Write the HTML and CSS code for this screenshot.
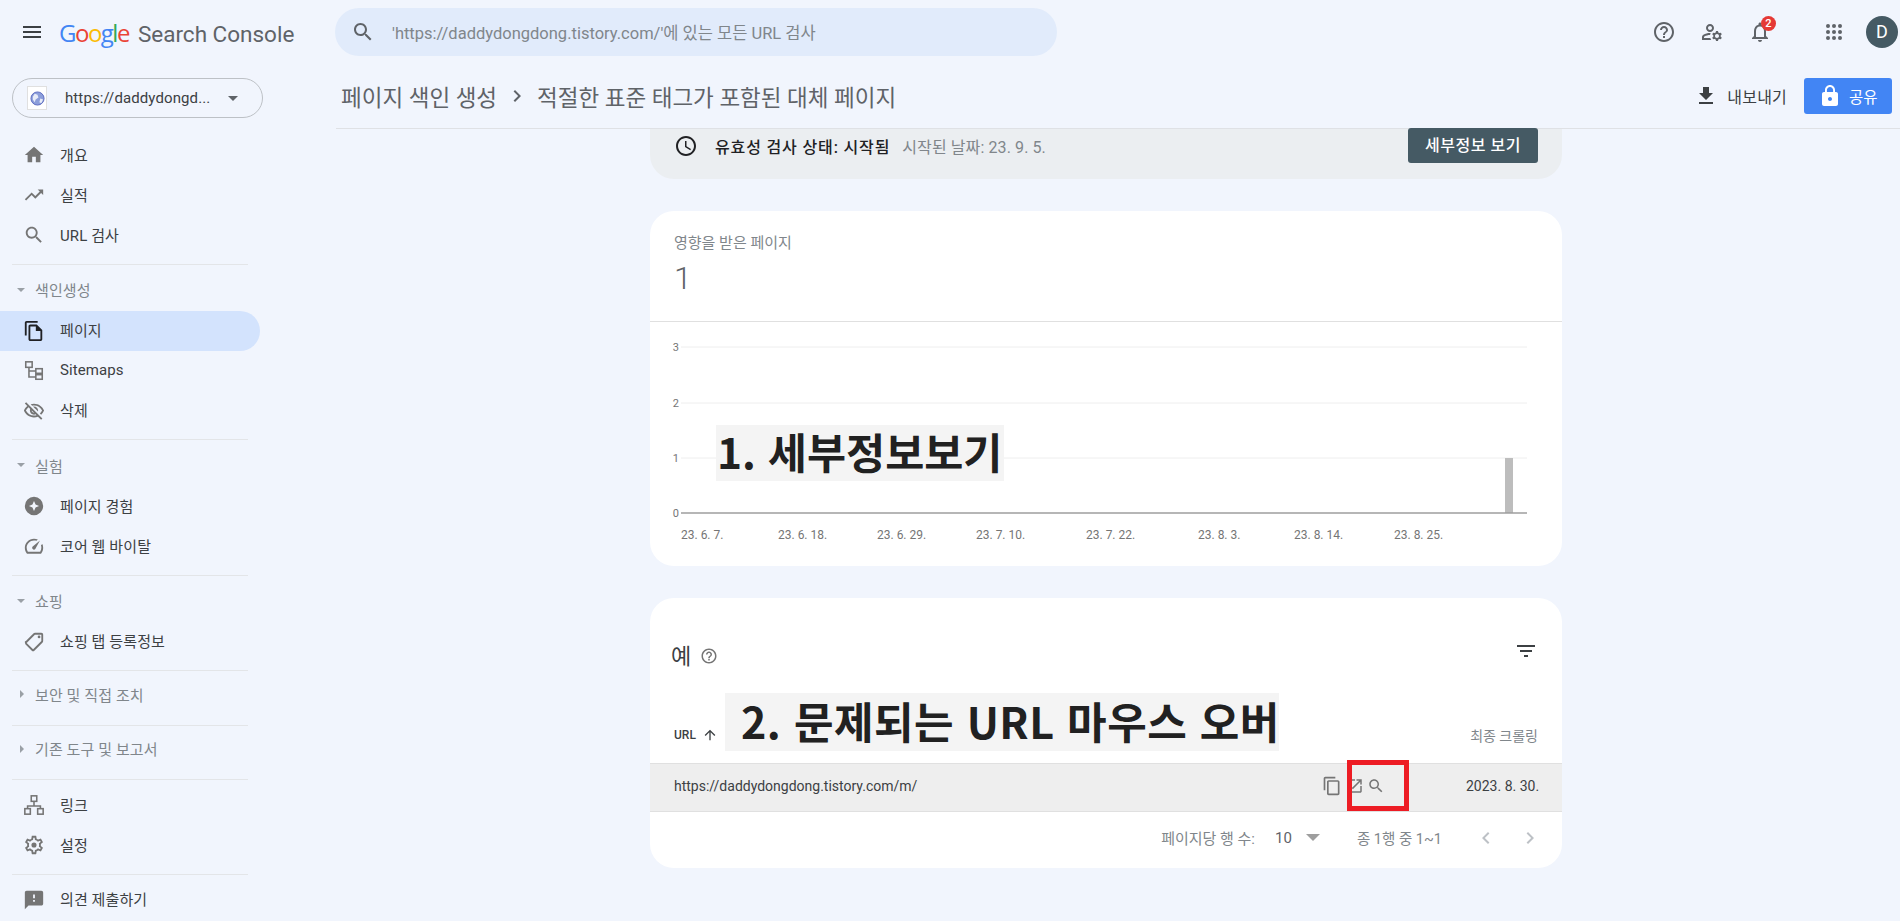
FILE: index.html
```html
<!DOCTYPE html>
<html lang="ko">

<head>
    <meta charset="UTF-8">
    <meta name="viewport" content="width=device-width, initial-scale=1.0">
    <title>Search Console</title>
    <link rel="stylesheet" href="styles.css">
</head>

<body>
    <svg class="sprite" width="0" height="0">
        <symbol id="i-menu" viewBox="0 0 24 24"><path d="M3 18h18v-2H3v2zm0-5h18v-2H3v2zm0-7v2h18V6H3z"/></symbol>
        <symbol id="i-search" viewBox="0 0 24 24"><path d="M15.5 14h-.79l-.28-.27C15.41 12.59 16 11.11 16 9.5 16 5.91 13.09 3 9.5 3S3 5.91 3 9.5 5.91 16 9.5 16c1.61 0 3.09-.59 4.23-1.57l.27.28v.79l5 4.99L20.49 19l-4.99-5zm-6 0C7.01 14 5 11.99 5 9.5S7.01 5 9.5 5 14 7.01 14 9.5 11.99 14 9.5 14z"/></symbol>
        <symbol id="i-help" viewBox="0 0 24 24"><path d="M11 18h2v-2h-2v2zm1-16C6.48 2 2 6.48 2 12s4.48 10 10 10 10-4.48 10-10S17.52 2 12 2zm0 18c-4.41 0-8-3.59-8-8s3.59-8 8-8 8 3.59 8 8-3.59 8-8 8zm0-14c-2.21 0-4 1.79-4 4h2c0-1.1.9-2 2-2s2 .9 2 2c0 2-3 1.75-3 5h2c0-2.25 3-2.5 3-5 0-2.21-1.79-4-4-4z"/></symbol>
        <symbol id="i-admin" viewBox="0 0 24 24"><path d="M4 18v-.65c0-.34.16-.66.41-.81C6.1 15.53 8.03 15 10 15c.03 0 .05 0 .08.01.1-.7.3-1.37.59-1.98-.22-.02-.44-.03-.67-.03-2.42 0-4.68.67-6.61 1.82-.88.52-1.39 1.5-1.39 2.53V20h9.26c-.42-.6-.75-1.28-.97-2H4zM10 12c2.21 0 4-1.79 4-4s-1.79-4-4-4-4 1.79-4 4 1.79 4 4 4zm0-6c1.1 0 2 .9 2 2s-.9 2-2 2-2-.9-2-2 .9-2 2-2zM20.75 16c0-.22-.03-.42-.06-.63l1.14-1.01-1-1.73-1.45.49c-.32-.27-.68-.48-1.08-.63L18 11h-2l-.3 1.49c-.4.15-.76.36-1.08.63l-1.45-.49-1 1.73 1.14 1.01c-.03.21-.06.41-.06.63s.03.42.06.63l-1.14 1.01 1 1.73 1.45-.49c.32.27.68.48 1.08.63L16 21h2l.3-1.49c.4-.15.76-.36 1.08-.63l1.45.49 1-1.73-1.14-1.01c.03-.21.06-.41.06-.63zM17 18c-1.1 0-2-.9-2-2s.9-2 2-2 2 .9 2 2-.9 2-2 2z"/></symbol>
        <symbol id="i-bell" viewBox="0 0 24 24"><path d="M12 22c1.1 0 2-.9 2-2h-4c0 1.1.9 2 2 2zm6-6v-5c0-3.07-1.63-5.64-4.5-6.32V4c0-.83-.67-1.5-1.5-1.5s-1.5.67-1.5 1.5v.68C7.64 5.36 6 7.92 6 11v5l-2 2v1h16v-1l-2-2zm-2 1H8v-6c0-2.48 1.51-4.5 4-4.5s4 2.02 4 4.5v6z"/></symbol>
        <symbol id="i-apps" viewBox="0 0 24 24"><circle cx="6" cy="6" r="2"/><circle cx="12" cy="6" r="2"/><circle cx="18" cy="6" r="2"/><circle cx="6" cy="12" r="2"/><circle cx="12" cy="12" r="2"/><circle cx="18" cy="12" r="2"/><circle cx="6" cy="18" r="2"/><circle cx="12" cy="18" r="2"/><circle cx="18" cy="18" r="2"/></symbol>
        <symbol id="i-home" viewBox="0 0 24 24"><path d="M10 20v-6h4v6h5v-8h3L12 3 2 12h3v8z"/></symbol>
        <symbol id="i-trend" viewBox="0 0 24 24"><path d="M16 6l2.29 2.29-4.88 4.88-4-4L2 16.59 3.41 18l6-6 4 4 6.3-6.29L22 12V6z"/></symbol>
        <symbol id="i-pages" viewBox="0 0 24 24"><path d="M16 1H4c-1.1 0-2 .9-2 2v14h2V3h12V1zm-1 4H8c-1.1 0-1.99.9-1.99 2L6 21c0 1.1.89 2 1.99 2H19c1.1 0 2-.9 2-2V11l-6-6zM8 21V7h6v5h5v9H8z"/></symbol>
        <symbol id="i-sitemap" viewBox="0 0 24 24"><g fill="none" stroke="#757575" stroke-width="1.7"><rect x="3" y="2" width="7" height="6"/><rect x="14" y="9.500" width="7" height="5"/><rect x="14" y="16" width="7" height="5"/><path d="M6.500 8v10.500H14M6.500 12H14"/></g></symbol>
        <symbol id="i-eye" viewBox="0 0 24 24"><path d="M12 6c3.79 0 7.170 2.130 8.820 5.500-.59 1.220-1.420 2.270-2.410 3.120l1.410 1.410c1.390-1.230 2.490-2.770 3.180-4.530C21.270 7.110 17 4 12 4c-1.270 0-2.490.2-3.640.57l1.650 1.650C10.660 6.090 11.320 6 12 6zm-1.070 1.140L13 9.210c.57.25 1.030.71 1.280 1.280l2.070 2.070c.08-.34.14-.7.14-1.070C16.500 9.010 14.480 7 12 7c-.37 0-.72.05-1.070.14zM2.010 3.870l2.680 2.680C3.060 7.830 1.770 9.530 1 11.500 2.730 15.890 7 19 12 19c1.520 0 2.980-.29 4.320-.82l3.420 3.420 1.410-1.410L3.420 2.450 2.010 3.870zm7.500 7.500l2.610 2.610c-.04.01-.08.02-.12.02-1.380 0-2.500-1.120-2.500-2.500 0-.05.01-.08.01-.13zm-3.400-3.400l1.750 1.750c-.23.55-.36 1.150-.36 1.780 0 2.480 2.020 4.500 4.500 4.500.63 0 1.230-.13 1.770-.36l.98.98c-.88.24-1.800.38-2.750.38-3.790 0-7.170-2.130-8.820-5.500.7-1.430 1.720-2.610 2.930-3.530z"/></symbol>
        <symbol id="i-star" viewBox="0 0 24 24"><path fill-rule="evenodd" d="M12 2a10 10 0 1 0 0 20 10 10 0 0 0 0-20zm0 4.500l1.700 3.800 3.800 1.700-3.800 1.700-1.700 3.800-1.700-3.800-3.800-1.700 3.800-1.700z"/></symbol>
        <symbol id="i-gauge" viewBox="0 0 24 24"><path d="M12 4C6.500 4 2 8.500 2 14c0 2.200.7 4.300 2 6l.3.400h15.400l.3-.4c1.300-1.700 2-3.800 2-6 0-1.500-.3-2.900-.9-4.200l-1.500 1.500c.3.900.4 1.800.4 2.700 0 1.600-.5 3.100-1.300 4.400H5.300C4.500 17.100 4 15.600 4 14c0-4.400 3.600-8 8-8 .9 0 1.800.1 2.700.4l1.500-1.500C14.900 4.300 13.500 4 12 4zm6.500 1.900l-7.900 6.700c-.8.800-.8 2 0 2.800.8.800 2 .8 2.800 0z"/></symbol>
        <symbol id="i-tag" viewBox="0 0 24 24"><path d="M2.590 11.580l9-9C11.950 2.220 12.450 2 13 2h7c1.100 0 2 .9 2 2v7c0 .55-.22 1.050-.59 1.420l-9 9c-.36.36-.86.58-1.410.58s-1.050-.22-1.410-.59l-7-7C2.220 13.050 2 12.550 2 12s.23-1.060.59-1.420zM11 20.010L20 11V4h-7v-.01l-9 9 7 7.020z"/><circle cx="17.500" cy="6.500" r="1.500"/></symbol>
        <symbol id="i-links" viewBox="0 0 24 24"><g fill="none" stroke="#757575" stroke-width="1.7"><rect x="9" y="2" width="6" height="6"/><rect x="2" y="16" width="6" height="6"/><rect x="16" y="16" width="6" height="6"/><path d="M12 8v5M5 16v-3h14v3"/></g></symbol>
        <symbol id="i-gear" viewBox="0 0 24 24"><path d="M19.430 12.980c.04-.32.07-.64.07-.98 0-.34-.03-.66-.07-.98l2.110-1.650c.19-.15.24-.42.12-.64l-2-3.460c-.09-.16-.26-.25-.44-.25-.06 0-.12.01-.17.03l-2.490 1c-.52-.4-1.080-.73-1.690-.98l-.38-2.650C14.460 2.180 14.250 2 14 2h-4c-.25 0-.46.18-.49.42l-.38 2.650c-.61.25-1.170.59-1.690.98l-2.490-1c-.06-.02-.12-.03-.18-.03-.17 0-.34.09-.43.25l-2 3.460c-.13.22-.07.49.12.64l2.110 1.650c-.04.32-.07.65-.07.98 0 .33.03.66.07.98l-2.110 1.650c-.19.15-.24.42-.12.64l2 3.460c.09.16.26.25.44.25.06 0 .12-.01.17-.03l2.490-1c.52.4 1.080.73 1.690.98l.38 2.650c.03.24.24.42.49.42h4c.25 0 .46-.18.49-.42l.38-2.650c.61-.25 1.170-.59 1.690-.98l2.490 1c.06.02.12.03.18.03.17 0 .34-.09.43-.25l2-3.460c.12-.22.07-.49-.12-.64l-2.110-1.650zm-1.980-1.710c.04.31.05.52.05.73 0 .21-.02.43-.05.73l-.14 1.130.89.7 1.080.84-.7 1.210-1.270-.51-1.040-.42-.9.68c-.43.32-.84.56-1.250.73l-1.060.43-.16 1.130-.2 1.350h-1.400l-.19-1.350-.16-1.130-1.060-.43c-.43-.18-.83-.41-1.230-.71l-.91-.7-1.060.43-1.270.51-.7-1.210 1.080-.84.89-.7-.14-1.130c-.03-.31-.05-.54-.05-.74s.02-.43.05-.73l.14-1.130-.89-.7-1.080-.84.7-1.210 1.270.51 1.040.42.9-.68c.43-.32.84-.56 1.250-.73l1.060-.43.16-1.130.2-1.350h1.390l.19 1.350.16 1.130 1.060.43c.43.18.83.41 1.230.71l.91.7 1.060-.43 1.270-.51.7 1.210-1.070.85-.89.7.14 1.130z"/><circle cx="12" cy="12" r="2.800"/></symbol>
        <symbol id="i-feedback" viewBox="0 0 24 24"><path d="M20 2H4c-1.100 0-1.990.9-1.990 2L2 22l4-4h14c1.100 0 2-.9 2-2V4c0-1.100-.9-2-2-2zm-7 12h-2v-2h2v2zm0-4h-2V6h2v4z"/></symbol>
        <symbol id="i-download" viewBox="0 0 24 24"><path d="M19 9h-4V3H9v6H5l7 7 7-7zM5 18v2h14v-2H5z"/></symbol>
        <symbol id="i-lock" viewBox="0 0 24 24"><path d="M18 8h-1V6c0-2.760-2.240-5-5-5S7 3.240 7 6v2H6c-1.100 0-2 .9-2 2v10c0 1.100.9 2 2 2h12c1.100 0 2-.9 2-2V10c0-1.100-.9-2-2-2zm-6 9c-1.100 0-2-.9-2-2s.9-2 2-2 2 .9 2 2-.9 2-2 2zm3.100-9H8.900V6c0-1.710 1.390-3.100 3.100-3.100 1.710 0 3.100 1.390 3.100 3.100v2z"/></symbol>
        <symbol id="i-clock" viewBox="0 0 24 24"><path d="M11.990 2C6.470 2 2 6.480 2 12s4.470 10 9.990 10C17.520 22 22 17.520 22 12S17.520 2 11.990 2zM12 20c-4.420 0-8-3.580-8-8s3.580-8 8-8 8 3.580 8 8-3.580 8-8 8zm.5-13H11v6l5.250 3.150.75-1.230-4.500-2.670z"/></symbol>
        <symbol id="i-filter" viewBox="0 0 24 24"><path d="M10 18h4v-2h-4v2zM3 6v2h18V6H3zm3 7h12v-2H6v2z"/></symbol>
        <symbol id="i-up" viewBox="0 0 24 24"><path d="M4 12l1.410 1.410L11 7.830V20h2V7.830l5.580 5.590L20 12l-8-8-8 8z"/></symbol>
        <symbol id="i-copy" viewBox="0 0 24 24"><path d="M16 1H4c-1.100 0-2 .9-2 2v14h2V3h12V1zm3 4H8c-1.100 0-2 .9-2 2v14c0 1.100.9 2 2 2h11c1.100 0 2-.9 2-2V7c0-1.100-.9-2-2-2zm0 16H8V7h11v14z"/></symbol>
        <symbol id="i-open" viewBox="0 0 24 24"><path d="M19 19H5V5h7V3H5c-1.110 0-2 .9-2 2v14c0 1.100.89 2 2 2h14c1.100 0 2-.9 2-2v-7h-2v7zM14 3v2h3.590l-9.830 9.830 1.410 1.410L19 6.410V10h2V3h-7z"/></symbol>
        <symbol id="i-prev" viewBox="0 0 24 24"><path d="M15.410 7.410L14 6l-6 6 6 6 1.410-1.410L10.830 12z"/></symbol>
        <symbol id="i-next" viewBox="0 0 24 24"><path d="M10 6L8.590 7.410 13.170 12l-4.580 4.590L10 18l6-6z"/></symbol>
    </svg>

    <header class="topbar">
        <svg class="ic menu-btn"><use href="#i-menu"/></svg>
        <div class="logo">
            <span class="g-word"><span class="c-blue">G</span><span class="c-red">o</span><span class="c-yellow">o</span><span class="c-blue">g</span><span class="c-green">l</span><span class="c-red">e</span></span>
            <span class="product">Search Console</span>
        </div>
        <div class="searchbox">
            <svg class="ic"><use href="#i-search"/></svg>
            <span>'https://daddydongdong.tistory.com/'에 있는 모든 URL 검사</span>
        </div>
        <div class="top-actions">
            <svg class="ic"><use href="#i-help"/></svg>
            <svg class="ic"><use href="#i-admin"/></svg>
            <div class="bell">
                <svg class="ic"><use href="#i-bell"/></svg>
                <span class="badge">2</span>
            </div>
            <svg class="ic apps"><use href="#i-apps"/></svg>
            <div class="avatar">D</div>
        </div>
    </header>

    <div class="layout">
        <aside class="sidebar">
            <div class="property">
                <div class="favicon">
                    <svg viewBox="0 0 16 16" width="15" height="15">
                        <circle cx="8" cy="8" r="7" fill="#8c9eda" stroke="#5c6bc0"/>
                        <path d="M5 3l3 1 1 3-3 2-1 3-2-3V6zM11 8l3 1-2 4-2-1z" fill="#e8ecf8"/>
                    </svg>
                </div>
                <span class="property-name">https://daddydongd...</span>
                <span class="caret"></span>
            </div>

            <nav class="nav">
                <a class="nav-item"><svg class="ic"><use href="#i-home"/></svg>개요</a>
                <a class="nav-item"><svg class="ic"><use href="#i-trend"/></svg>실적</a>
                <a class="nav-item"><svg class="ic"><use href="#i-search"/></svg>URL 검사</a>
                <hr class="nav-line">
                <div class="nav-section"><span class="tri"></span>색인생성</div>
                <a class="nav-item active"><svg class="ic"><use href="#i-pages"/></svg>페이지</a>
                <a class="nav-item"><svg class="ic"><use href="#i-sitemap"/></svg>Sitemaps</a>
                <a class="nav-item"><svg class="ic"><use href="#i-eye"/></svg>삭제</a>
                <hr class="nav-line">
                <div class="nav-section"><span class="tri"></span>실험</div>
                <a class="nav-item"><svg class="ic"><use href="#i-star"/></svg>페이지 경험</a>
                <a class="nav-item"><svg class="ic"><use href="#i-gauge"/></svg>코어 웹 바이탈</a>
                <hr class="nav-line">
                <div class="nav-section"><span class="tri"></span>쇼핑</div>
                <a class="nav-item"><svg class="ic"><use href="#i-tag"/></svg>쇼핑 탭 등록정보</a>
                <hr class="nav-line">
                <div class="nav-section closed"><span class="tri"></span>보안 및 직접 조치</div>
                <hr class="nav-line">
                <div class="nav-section closed"><span class="tri"></span>기존 도구 및 보고서</div>
                <hr class="nav-line">
                <a class="nav-item first"><svg class="ic"><use href="#i-links"/></svg>링크</a>
                <a class="nav-item"><svg class="ic"><use href="#i-gear"/></svg>설정</a>
                <hr class="nav-line">
                <a class="nav-item first"><svg class="ic"><use href="#i-feedback"/></svg>의견 제출하기</a>
            </nav>
        </aside>

        <main class="main">
            <div class="pagehead">
                <div class="crumbs">
                    <span>페이지 색인 생성</span>
                    <svg class="ic crumb-sep"><use href="#i-next"/></svg>
                    <span>적절한 표준 태그가 포함된 대체 페이지</span>
                </div>
                <div class="head-actions">
                    <div class="export"><svg class="ic"><use href="#i-download"/></svg>내보내기</div>
                    <div class="share"><svg class="ic"><use href="#i-lock"/></svg>공유</div>
                </div>
            </div>

            <div class="content">
                <section class="status">
                    <svg class="ic"><use href="#i-clock"/></svg>
                    <b>유효성 검사 상태: 시작됨</b>
                    <span class="status-date">시작된 날짜: 23. 9. 5.</span>
                    <div class="detail-btn">세부정보 보기</div>
                </section>

                <section class="card chart-card">
                    <div class="metric">
                        <div class="metric-label">영향을 받은 페이지</div>
                        <div class="metric-value">1</div>
                    </div>
                    <svg class="chart" width="912" height="244" viewBox="0 0 912 244">
                        <g class="grid">
                            <line x1="31" x2="877" y1="25" y2="25"/>
                            <line x1="31" x2="877" y1="81" y2="81"/>
                            <line x1="31" x2="877" y1="136" y2="136"/>
                        </g>
                        <rect x="855" y="136" width="8" height="55" fill="#bdbdbd"/>
                        <line class="axis" x1="31" x2="877" y1="191" y2="191"/>
                        <g class="y-labels">
                            <text x="29" y="29">3</text>
                            <text x="29" y="85">2</text>
                            <text x="29" y="140">1</text>
                            <text x="29" y="195">0</text>
                        </g>
                        <g class="x-labels">
                            <text x="31" y="217">23. 6. 7.</text>
                            <text x="128" y="217">23. 6. 18.</text>
                            <text x="227" y="217">23. 6. 29.</text>
                            <text x="326" y="217">23. 7. 10.</text>
                            <text x="436" y="217">23. 7. 22.</text>
                            <text x="548" y="217">23. 8. 3.</text>
                            <text x="644" y="217">23. 8. 14.</text>
                            <text x="744" y="217">23. 8. 25.</text>
                        </g>
                    </svg>
                    <div class="note note-one">1. 세부정보보기</div>
                </section>

                <section class="card table-card">
                    <div class="table-title">
                        <span class="title-text">예</span>
                        <svg class="ic small-help"><use href="#i-help"/></svg>
                        <svg class="ic filter"><use href="#i-filter"/></svg>
                    </div>
                    <div class="table-head">
                        <span class="th-url">URL<svg class="ic"><use href="#i-up"/></svg></span>
                        <span class="th-date">최종 크롤링</span>
                    </div>
                    <div class="table-row">
                        <span class="row-url">https://daddydongdong.tistory.com/m/</span>
                        <div class="row-tools">
                            <svg class="ic"><use href="#i-copy"/></svg>
                            <svg class="ic"><use href="#i-open"/></svg>
                            <svg class="ic"><use href="#i-search"/></svg>
                        </div>
                        <span class="row-date">2023. 8. 30.</span>
                    </div>
                    <div class="table-foot">
                        <span>페이지당 행 수:</span>
                        <span class="per-page">10</span>
                        <span class="caret foot-caret"></span>
                        <span class="range">종 1행 중 1~1</span>
                        <svg class="ic pager"><use href="#i-prev"/></svg>
                        <svg class="ic pager"><use href="#i-next"/></svg>
                    </div>
                    <div class="note note-two">2. 문제되는 URL 마우스 오버</div>
                    <div class="redbox"></div>
                </section>
            </div>
        </main>
    </div>
</body>

</html>
```

FILE: styles.css
```css
*{
    margin: 0;
    box-sizing: border-box;
}
html, body{
    height: 921px;
    overflow: hidden;
}
body{
    background: #f1f5fd;
    color: #202124;
    font-family: Roboto, "Noto Sans CJK KR", sans-serif;
}
.sprite{
    position: absolute;
}
.ic{
    width: 24px;
    height: 24px;
    flex: none;
    fill: #5f6368;
}

/* top bar */
.topbar{
    height: 64px;
    display: flex;
    align-items: center;
}
.menu-btn{
    margin-left: 20px;
    fill: #3c4043;
}
.logo{
    width: 276px;
    margin-left: 15px;
    display: flex;
    align-items: baseline;
    gap: 9px;
}
.g-word{
    font-family: "Open Sans", sans-serif;
    font-size: 24px;
    letter-spacing: -1.5px;
}
.c-blue{ color: #4285f4; }
.c-red{ color: #ea4335; }
.c-yellow{ color: #fbbc05; }
.c-green{ color: #34a853; }
.product{
    font-size: 22.5px;
    color: #5f6368;
}
.searchbox{
    width: 722px;
    height: 48px;
    background: #e1ebfb;
    border-radius: 24px;
    display: flex;
    align-items: center;
    padding-left: 16px;
    gap: 17px;
    font-size: 16.5px;
    color: #80868b;
}
.top-actions{
    margin-left: auto;
    display: flex;
    align-items: center;
    padding-right: 2px;
}
.top-actions > .ic{
    margin-left: 24px;
}
.bell{
    position: relative;
    width: 24px;
    height: 24px;
    margin-left: 24px;
}
.badge{
    position: absolute;
    top: -4px;
    right: -4px;
    width: 15px;
    height: 15px;
    background: #e53935;
    border-radius: 50%;
    color: #fff;
    font-size: 11px;
    font-weight: 500;
    line-height: 15px;
    text-align: center;
}
.top-actions > .apps{
    margin-left: 50px;
}
.avatar{
    width: 32px;
    height: 32px;
    margin-left: 20px;
    border-radius: 50%;
    background: #455a64;
    color: #fff;
    font-size: 18px;
    line-height: 32px;
    text-align: center;
}

/* sidebar */
.layout{
    display: flex;
    height: 857px;
}
.sidebar{
    width: 336px;
    flex: none;
    padding-top: 14px;
}
.property{
    width: 251px;
    height: 40px;
    margin-left: 12px;
    border: 1px solid #bdc1c6;
    border-radius: 20px;
    display: flex;
    align-items: center;
    padding-left: 14px;
    font-size: 15px;
    letter-spacing: .1px;
    color: #3c4043;
}
.favicon{
    width: 20px;
    height: 24px;
    background: #fff;
    border: 1px solid #e0e0e0;
    display: flex;
    align-items: center;
    justify-content: center;
}
.property-name{
    margin-left: 18px;
    width: 150px;
    white-space: nowrap;
}
.caret{
    width: 0;
    height: 0;
    border-left: 5px solid transparent;
    border-right: 5px solid transparent;
    border-top: 5px solid #5f6368;
    margin-left: 13px;
}
.nav{
    margin-top: 17px;
    width: 260px;
}
.nav-item{
    height: 40px;
    display: flex;
    align-items: center;
    padding: 0 0 2px 23px;
    gap: 15px;
    font-size: 15px;
    letter-spacing: .1px;
    color: #3c4043;
}
.nav-item .ic{
    width: 22px;
    height: 22px;
    margin-top: 2px;
    fill: #757575;
}
.nav-item.active{
    background: #d3e3fd;
    border-radius: 0 20px 20px 0;
}
.nav-item.active .ic{
    fill: #202124;
}
.nav-item.first{
    margin-top: 5px;
}
.nav-line{
    border: none;
    border-top: 1px solid #e3e5e8;
    width: 236px;
    margin: 8.5px 0 0 12px;
}
.nav-section{
    height: 46px;
    padding: 4px 0 0 17px;
    display: flex;
    align-items: center;
    font-size: 15px;
    letter-spacing: .1px;
    color: #80868b;
}
.nav-section.closed{
    height: 45px;
    padding-top: 1px;
}
.tri{
    width: 0;
    height: 0;
    border-left: 4.5px solid transparent;
    border-right: 4.5px solid transparent;
    border-top: 4.5px solid #9aa0a6;
    margin-right: 10px;
}
.closed .tri{
    border-top: 4.5px solid transparent;
    border-bottom: 4.5px solid transparent;
    border-left: 4.5px solid #9aa0a6;
    border-right: none;
    margin: 0 11px 0 3px;
}

/* page header */
.main{
    flex: 1;
    min-width: 0;
}
.pagehead{
    height: 65px;
    border-bottom: 1px solid #dfe1e5;
    display: flex;
    align-items: center;
    padding-bottom: 1px;
}
.crumbs{
    display: flex;
    align-items: center;
    padding-left: 5px;
    font-size: 22.5px;
    color: #5f6368;
}
.crumb-sep{
    margin: 0 8px;
}
.head-actions{
    margin-left: auto;
    display: flex;
    align-items: center;
    padding-right: 8px;
}
.export{
    display: flex;
    align-items: center;
    gap: 9px;
    font-size: 16px;
    letter-spacing: .2px;
    color: #3c4043;
}
.export .ic{
    fill: #3c4043;
}
.share{
    width: 88px;
    height: 36px;
    margin-left: 17px;
    background: #4285f4;
    border-radius: 3px;
    display: flex;
    align-items: center;
    gap: 7px;
    padding-left: 14px;
    font-size: 15.5px;
    color: #fff;
}
.share .ic{
    fill: #fff;
}

/* content column */
.content{
    width: 912px;
    margin-left: 314px;
    display: flex;
    flex-direction: column;
    gap: 32px;
}
.status{
    height: 50px;
    background: #ebeef1;
    border-radius: 0 0 24px 24px;
    display: flex;
    align-items: center;
    padding: 0 24px 16px 24px;
    font-size: 16px;
}
.status b{
    margin-left: 17px;
    font-weight: 500;
    letter-spacing: .85px;
}
.status .ic{
    fill: #202124;
}
.status-date{
    margin-left: 12px;
    letter-spacing: .1px;
    color: #80868b;
}
.detail-btn{
    margin: 0 0 -15px auto;
    width: 130px;
    height: 35px;
    background: #455a64;
    border-radius: 3px;
    color: #fff;
    font-size: 16px;
    font-weight: 500;
    letter-spacing: .5px;
    line-height: 35px;
    text-align: center;
    position: relative;
    top: -8px;
}
.card{
    background: #fff;
    border-radius: 24px;
    position: relative;
}
.chart-card{
    height: 355px;
}
.metric{
    height: 111px;
    border-bottom: 1px solid #e0e0e0;
    padding: 20px 24px 0;
}
.metric-label{
    font-size: 15px;
    color: #80868b;
}
.metric-value{
    margin-top: 7px;
    font-size: 32px;
    font-weight: 300;
    color: #5f6368;
}
.chart{
    display: block;
}
.grid line{
    stroke: #eeeeee;
}
.axis{
    stroke: #9e9e9e;
    stroke-width: 1.5;
}
.y-labels text{
    font-size: 11px;
    fill: #757575;
    text-anchor: end;
}
.x-labels text{
    font-size: 12px;
    fill: #757575;
}
.note{
    position: absolute;
    background: #f4f4f4;
    color: #212121;
    font-family: "Noto Sans CJK KR", sans-serif;
    font-weight: 700;
    white-space: nowrap;
}
.note-one{
    left: 66px;
    top: 214px;
    width: 288px;
    height: 56px;
    font-size: 42.5px;
    line-height: 52px;
    padding-left: 1px;
}
.note-two{
    left: 75px;
    top: 95px;
    width: 554px;
    height: 58px;
    font-size: 43px;
    letter-spacing: .5px;
    line-height: 54px;
    padding-left: 16px;
}

/* table card */
.table-card{
    height: 270px;
}
.table-title{
    height: 112px;
    display: flex;
    align-items: center;
    padding: 0 24px 0 21px;
    font-size: 22px;
    color: #3c4043;
}
.small-help{
    width: 18px;
    height: 18px;
    margin: 4px 0 0 9px;
    fill: #757575;
}
.filter{
    margin-left: auto;
    margin-top: -6px;
    fill: #3c4043;
}
.table-head{
    height: 54px;
    display: flex;
    align-items: center;
    justify-content: space-between;
    padding: 0 24px 4px;
    border-bottom: 1px solid #e0e0e0;
    font-size: 12px;
}
.th-url{
    display: flex;
    align-items: center;
    gap: 6px;
    font-weight: 500;
    color: #3c4043;
}
.th-url .ic{
    width: 16px;
    height: 16px;
    fill: #3c4043;
}
.th-date{
    font-size: 14px;
    color: #80868b;
}
.table-row{
    height: 48px;
    background: #eeeeee;
    border-bottom: 1px solid #e0e0e0;
    display: flex;
    align-items: center;
    padding: 0 24px 3px;
    font-size: 14px;
    color: #3c4043;
}
.row-tools{
    margin-left: auto;
    width: 144px;
    display: flex;
    align-items: center;
    gap: 4px;
}
.row-tools .ic{
    width: 18px;
    height: 18px;
    fill: #757575;
}
.row-tools .ic:first-child{
    width: 20px;
    height: 20px;
}
.row-tools .ic:last-child{
    margin-left: -1px;
}
.row-date{
    width: 72px;
    text-align: right;
    white-space: nowrap;
}
.table-foot{
    height: 55px;
    padding: 0 20px 4px 0;
    display: flex;
    align-items: center;
    justify-content: flex-end;
    font-size: 15px;
    color: #80868b;
}
.per-page{
    margin-left: 20px;
    color: #5f6368;
}
.foot-caret{
    border-left-width: 7px;
    border-right-width: 7px;
    border-top: 7px solid #9e9e9e;
    margin-left: 14px;
}
.range{
    margin: 0 32px 0 37px;
    font-size: 14.5px;
}
.pager{
    fill: #bdc1c6;
    margin-left: 20px;
}
.range + .pager{
    margin-left: 0;
}
.redbox{
    position: absolute;
    left: 697px;
    top: 162px;
    width: 62px;
    height: 51px;
    border: 5px solid #ed1c24;
}
```
